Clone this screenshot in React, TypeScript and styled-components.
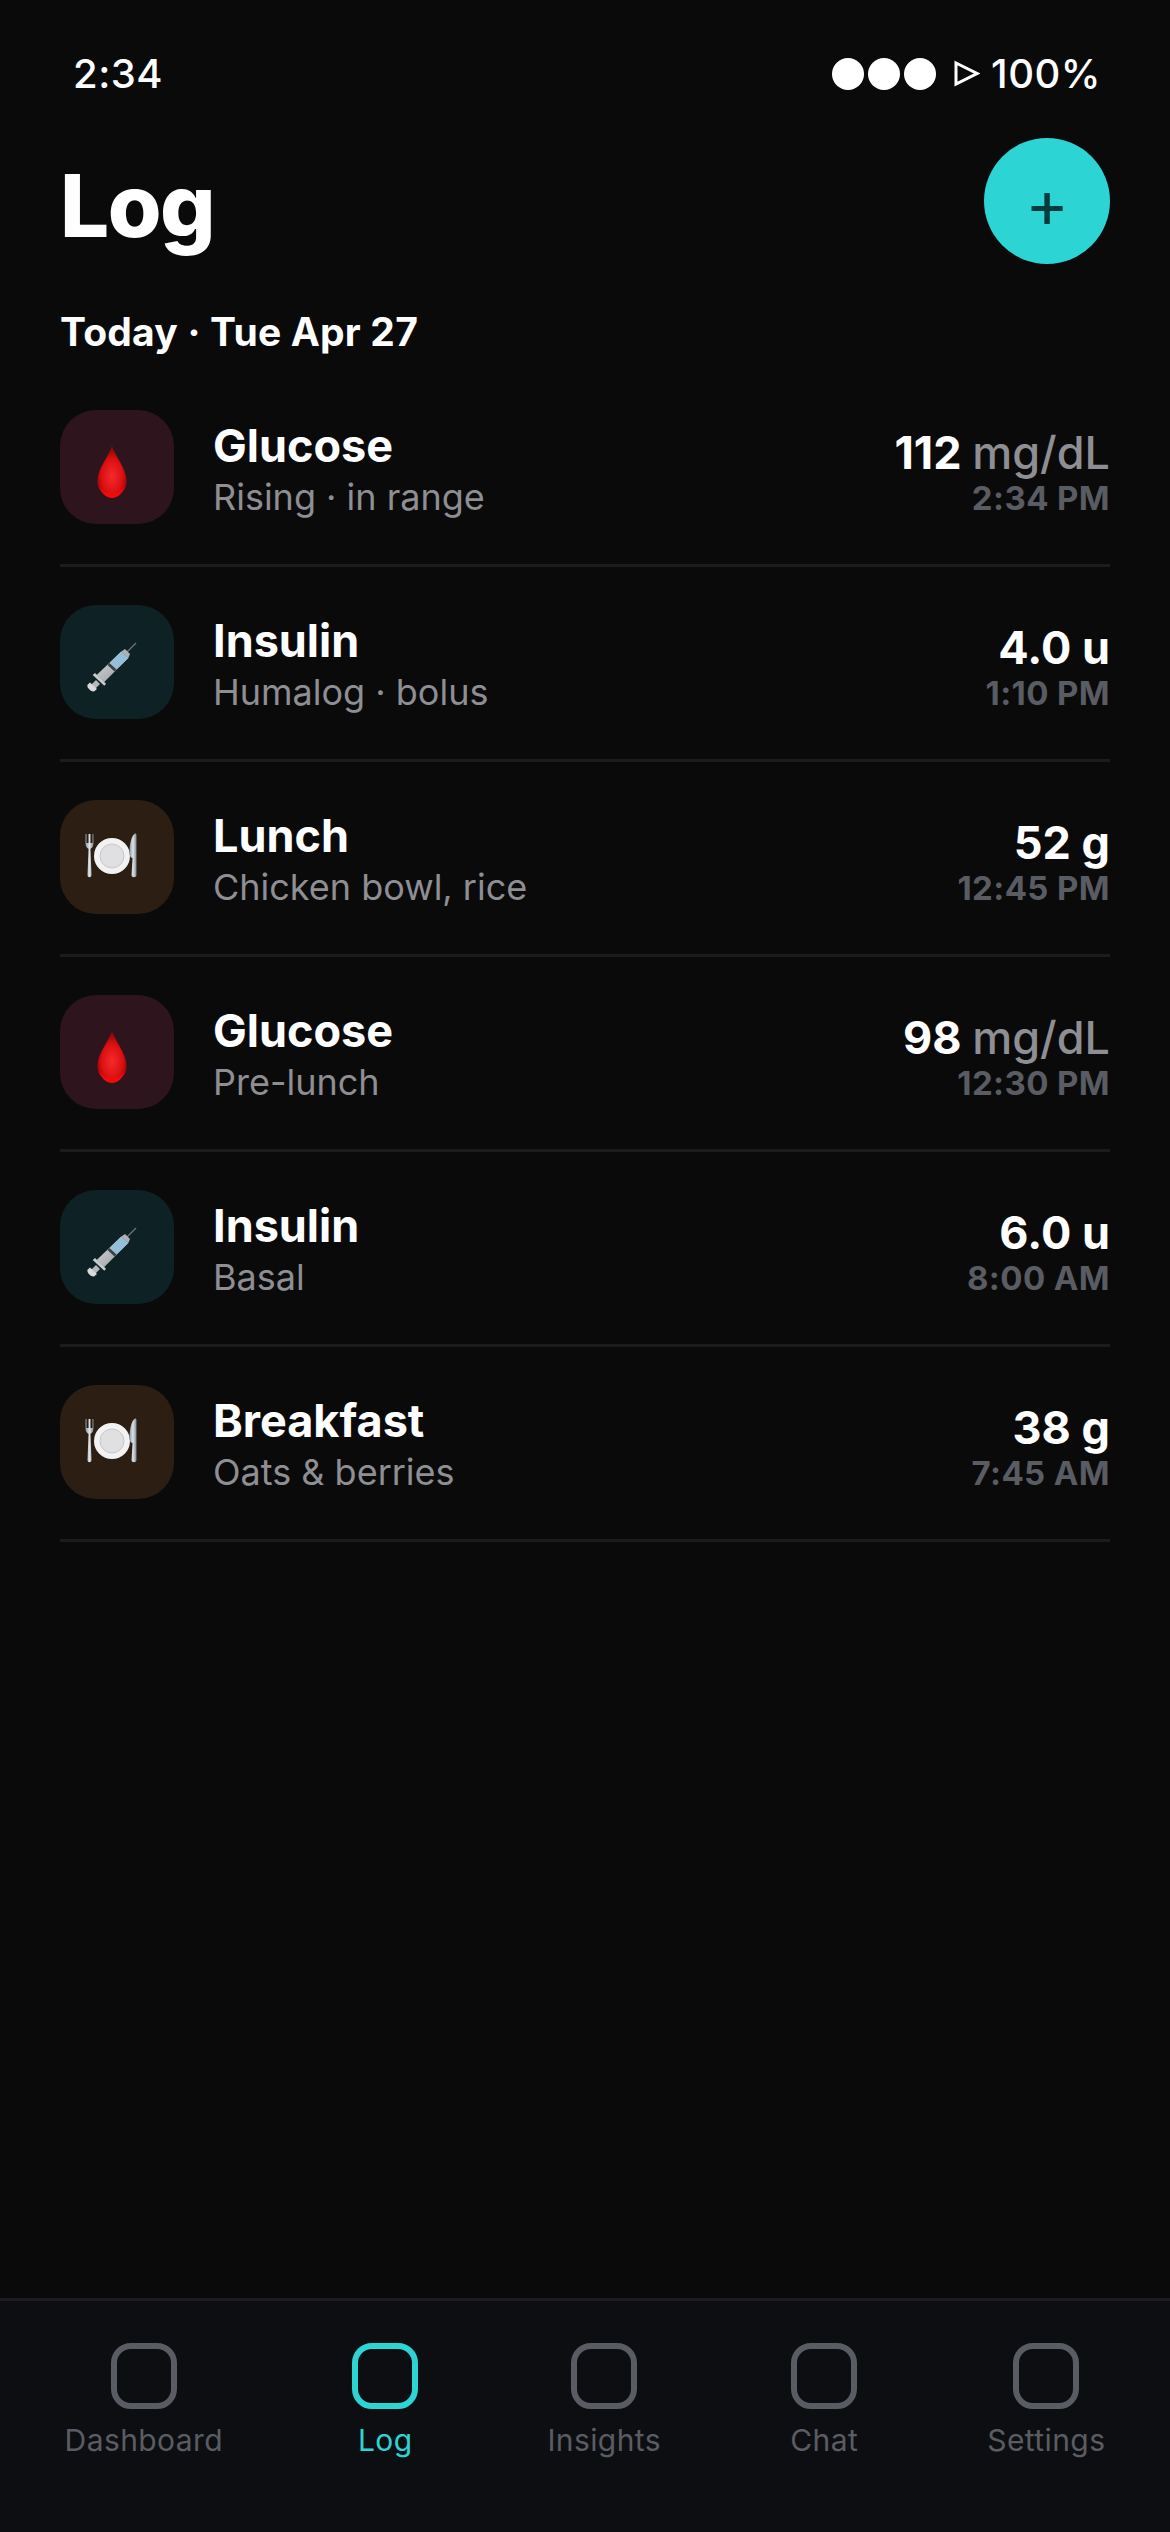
import React from "react";
import styled, { createGlobalStyle } from "styled-components";

const GlobalStyle = createGlobalStyle`
  html, body {
    margin: 0;
    padding: 0;
    background: #0a0a0b;
  }
  * {
    box-sizing: border-box;
  }
`;

const Screen = styled.div`
  width: 1170px;
  height: 2532px;
  display: flex;
  flex-direction: column;
  background: #0a0a0b;
  color: #fff;
  font-family: Inter, "Liberation Sans", sans-serif;
  overflow: hidden;
`;

const Content = styled.main`
  flex: 1;
  padding: 0 60px;
`;

const StatusBar = styled.div`
  height: 138px;
  padding: 51px 9px 0 13px;
  display: flex;
  justify-content: space-between;
  align-items: flex-start;
  font-size: 40px;
  line-height: 45px;
  font-weight: 500;
  letter-spacing: 0.5px;
`;

const StatusRight = styled.div`
  display: flex;
  align-items: center;
`;

const Dots = styled.span`
  display: flex;
  gap: 4px;
  margin-right: 17px;
`;

const Dot = styled.span`
  width: 32px;
  height: 32px;
  border-radius: 50%;
  background: #fff;
`;

const PlayMark = styled.svg`
  width: 27px;
  height: 27px;
  margin-right: 11px;
`;

const Header = styled.header`
  height: 126px;
  display: flex;
  justify-content: space-between;
  align-items: center;
`;

const Title = styled.h1`
  margin: 0;
  padding-top: 10px;
  font-size: 87px;
  line-height: 100px;
  font-weight: 800;
  letter-spacing: -1.5px;
`;

const AddButton = styled.button`
  width: 126px;
  height: 126px;
  padding: 4px 0 0;
  border: 0;
  border-radius: 50%;
  background: #2dd4d4;
  color: #063a3c;
  font-family: inherit;
  font-size: 66px;
  line-height: 122px;
  font-weight: 400;
`;

const DateLine = styled.div`
  margin-top: 46px;
  height: 44px;
  font-size: 39px;
  line-height: 44px;
  font-weight: 700;
  letter-spacing: 0.2px;
`;

const Rows = styled.div`
  margin-top: 18px;
  display: flex;
  flex-direction: column;
`;

const Row = styled.div`
  height: 195px;
  padding-bottom: 3px;
  display: flex;
  align-items: center;
  border-bottom: 3px solid #1c1c1f;
`;

const IconTile = styled.div<{ $tone: string }>`
  width: 114px;
  height: 114px;
  flex: none;
  padding-right: 10px;
  display: flex;
  align-items: center;
  justify-content: center;
  border-radius: 36px;
  background: ${(p) => p.$tone};
`;

const EmojiArt = styled.svg`
  width: 54px;
  height: 64px;
  flex: none;
`;

const RowText = styled.div`
  flex: 1;
  margin-left: 39px;
  padding-top: 3px;
`;

const Name = styled.div`
  font-size: 45px;
  line-height: 54px;
  font-weight: 650;
`;

const Detail = styled.div`
  margin-top: 3px;
  font-size: 36px;
  line-height: 42px;
  color: #8e8e93;
`;

const RowValue = styled.div`
  padding-top: 11px;
  text-align: right;
`;

const Amount = styled.div`
  font-size: 45px;
  line-height: 50px;
  font-weight: 650;
`;

const Unit = styled.span<{ $muted: boolean }>`
  color: ${(p) => (p.$muted ? "#8e8e93" : "#fff")};
  font-weight: ${(p) => (p.$muted ? 550 : 650)};
`;

const Time = styled.div`
  margin-top: 1px;
  font-size: 33px;
  line-height: 38px;
  font-weight: 700;
  letter-spacing: 0.4px;
  color: #5a5c63;
`;

const TabBar = styled.nav`
  height: 234px;
  flex: none;
  padding-top: 42px;
  display: flex;
  justify-content: space-around;
  align-items: flex-start;
  background: #0d0e11;
  border-top: 3px solid #1c1c1f;
`;

const Tab = styled.div<{ $active?: boolean }>`
  display: flex;
  flex-direction: column;
  align-items: center;
  color: ${(p) => (p.$active ? "#2dd4d4" : "#5a5c63")};
`;

const TabGlyph = styled.span`
  width: 66px;
  height: 66px;
  border: 6px solid currentColor;
  border-radius: 20px;
`;

const TabLabel = styled.span`
  margin-top: 13px;
  font-size: 30px;
  line-height: 36px;
  letter-spacing: 0.4px;
`;

const Drop = () => (
  <EmojiArt viewBox="0 0 54 64">
    <defs>
      <radialGradient id="dropFill" cx="50%" cy="62%" r="55%">
        <stop offset="0%" stopColor="#f42a2c" />
        <stop offset="65%" stopColor="#dc1012" />
        <stop offset="100%" stopColor="#960406" />
      </radialGradient>
    </defs>
    <g transform="translate(9 10)">
      <path d="M18 1C15 11 4 23 3.500 35C3 46 10 50 18 50C26 50 33 46 32.500 35C32 23 21 11 18 1Z" fill="url(#dropFill)" />
      <path d="M5 41C8 46 13 48.500 18 48.500C23 48.500 28 46 31 41C29 48 24 53 18 53C12 53 7 48 5 41Z" fill="#f20a0d" />
    </g>
  </EmojiArt>
);

const Syringe = () => (
  <EmojiArt viewBox="0 0 54 64">
    <defs>
      <linearGradient id="barrel" x1="0" y1="0" x2="1" y2="1">
        <stop offset="0%" stopColor="#dcdde0" />
        <stop offset="100%" stopColor="#8f9398" />
      </linearGradient>
    </defs>
    <path d="M42 22L51 13" stroke="#6f7478" strokeWidth="1.200" />
    <path d="M36 21.700L40 19L45 24L43.300 28Z" fill="#aeb2b6" />
    <path d="M36 21.700L43.300 28L19 52.300L11.700 45Z" fill="url(#barrel)" />
    <path d="M36 21.700L43.300 28L32 39L25 32.500Z" fill="#93c0d8" />
    <path d="M24.500 33L31.500 39.500L29.500 41.500L22.500 35Z" fill="#39424a" />
    <path d="M7.700 45L10 43L21 53.700L19.300 55.700Z" fill="#c9cbce" />
    <path d="M11 50L15 54L10 59L6 55Z" fill="#b5b8bc" />
    <path d="M2.300 55L5 52.500L12 59L9 61.500C6 62 2 58 2.300 55Z" fill="#d9dadc" />
  </EmojiArt>
);

const Plate = () => (
  <EmojiArt viewBox="0 0 54 64">
    <defs>
      <linearGradient id="metal" x1="0" y1="0" x2="1" y2="0">
        <stop offset="0%" stopColor="#8b97a3" />
        <stop offset="50%" stopColor="#dfe3e7" />
        <stop offset="100%" stopColor="#7e8a96" />
      </linearGradient>
    </defs>
    <g transform="translate(0.500 8)">
      <path d="M0 1V10C0 14 2 15 3 16L2 42C2 45 6 45 6 42L5 16C6 15 8 14 8 10V1H7V10H5V1H3V10H1V1Z" fill="url(#metal)" />
      <circle cx="26.500" cy="23" r="18" fill="#f2f2f2" />
      <circle cx="26.500" cy="23" r="12" fill="#e0e0e2" stroke="#c6c6c8" strokeWidth="1" />
      <path d="M49 1C46 3 44 11 44 20C44 24 46 25 47 25L46 42C46 45 51 45 51 42V2C51 1 50 0 49 1Z" fill="url(#metal)" />
    </g>
  </EmojiArt>
);

const tiles = {
  glucose: { tone: "#2d141d", icon: <Drop /> },
  insulin: { tone: "#0e2225", icon: <Syringe /> },
  meal: { tone: "#2c1e13", icon: <Plate /> },
};

const entries = [
  { kind: "glucose", name: "Glucose", detail: "Rising · in range", amount: "112", unit: "mg/dL", time: "2:34 PM" },
  { kind: "insulin", name: "Insulin", detail: "Humalog · bolus", amount: "4.0", unit: "u", time: "1:10 PM" },
  { kind: "meal", name: "Lunch", detail: "Chicken bowl, rice", amount: "52", unit: "g", time: "12:45 PM" },
  { kind: "glucose", name: "Glucose", detail: "Pre-lunch", amount: "98", unit: "mg/dL", time: "12:30 PM" },
  { kind: "insulin", name: "Insulin", detail: "Basal", amount: "6.0", unit: "u", time: "8:00 AM" },
  { kind: "meal", name: "Breakfast", detail: "Oats & berries", amount: "38", unit: "g", time: "7:45 AM" },
] as const;

const tabs = ["Dashboard", "Log", "Insights", "Chat", "Settings"];

const App = () => (
  <Screen>
    <GlobalStyle />
    <Content>
      <StatusBar>
        <span>2:34</span>
        <StatusRight>
          <Dots>
            <Dot />
            <Dot />
            <Dot />
          </Dots>
          <PlayMark viewBox="0 0 27 27">
            <path d="M3 3L24 13.500L3 24Z" fill="none" stroke="#fff" strokeWidth="3" />
          </PlayMark>
          <span>100%</span>
        </StatusRight>
      </StatusBar>
      <Header>
        <Title>Log</Title>
        <AddButton>+</AddButton>
      </Header>
      <DateLine>Today · Tue Apr 27</DateLine>
      <Rows>
        {entries.map((entry, index) => (
          <Row key={index}>
            <IconTile $tone={tiles[entry.kind].tone}>{tiles[entry.kind].icon}</IconTile>
            <RowText>
              <Name>{entry.name}</Name>
              <Detail>{entry.detail}</Detail>
            </RowText>
            <RowValue>
              <Amount>
                {entry.amount} <Unit $muted={entry.unit === "mg/dL"}>{entry.unit}</Unit>
              </Amount>
              <Time>{entry.time}</Time>
            </RowValue>
          </Row>
        ))}
      </Rows>
    </Content>
    <TabBar>
      {tabs.map((tab) => (
        <Tab key={tab} $active={tab === "Log"}>
          <TabGlyph />
          <TabLabel>{tab}</TabLabel>
        </Tab>
      ))}
    </TabBar>
  </Screen>
);

export default App;
